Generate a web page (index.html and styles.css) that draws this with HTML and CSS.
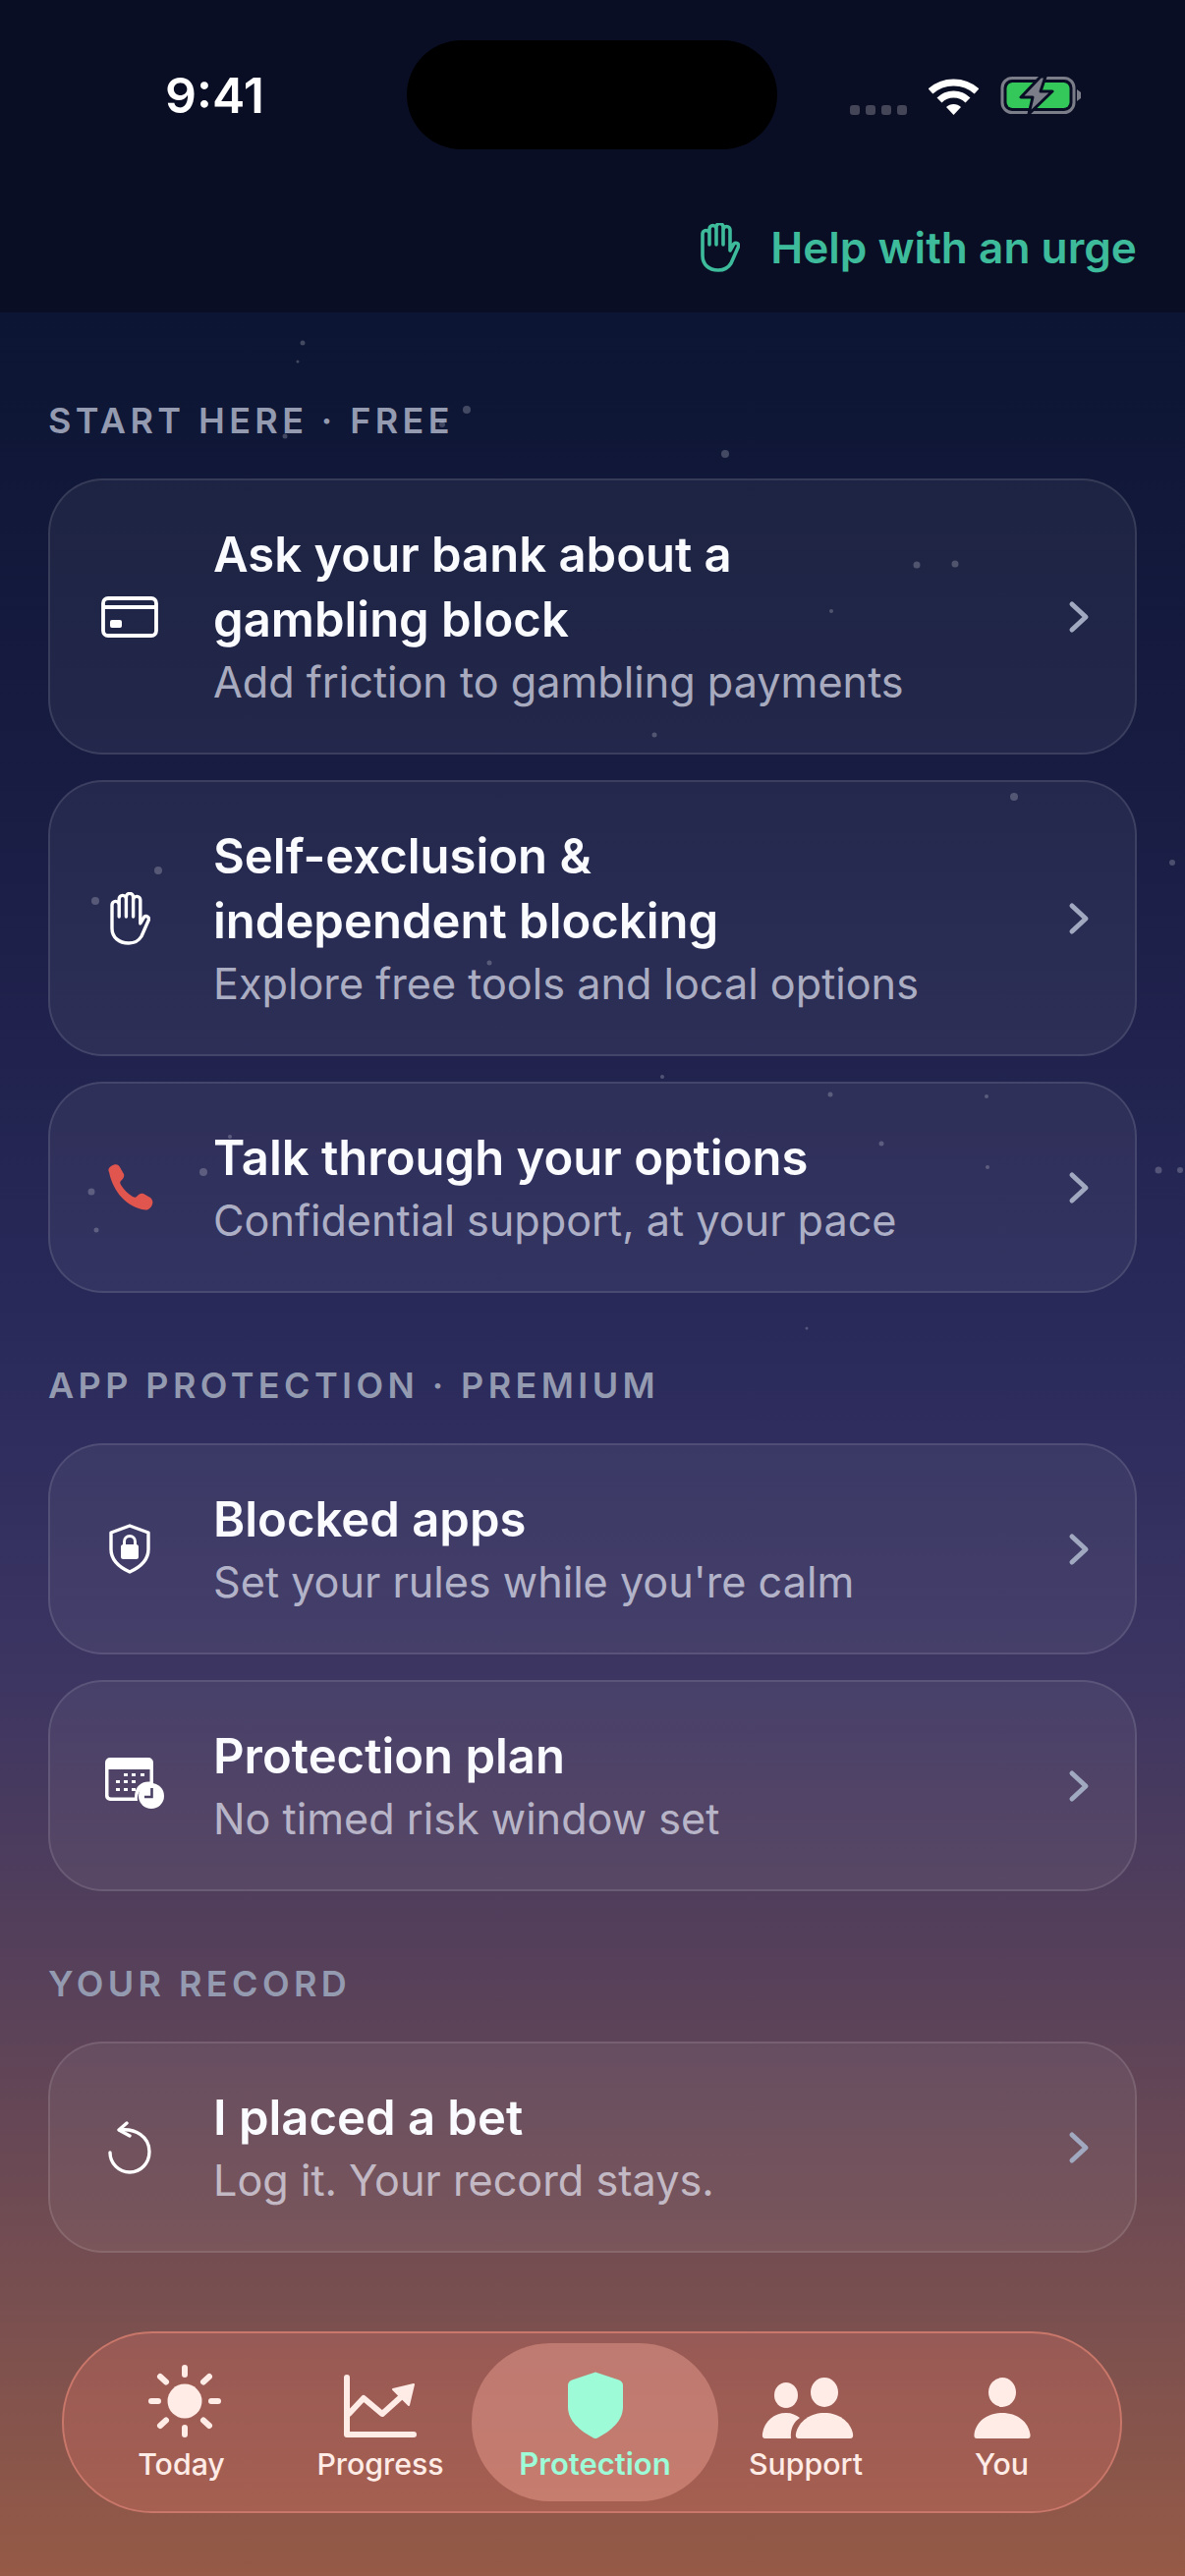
FILE: index.html
```html
<!DOCTYPE html>
<html lang="en">
<head>
    <meta charset="UTF-8">
    <meta name="viewport" content="width=device-width, initial-scale=1.0">
    <title>Protection</title>
    <link rel="stylesheet" href="styles.css">
</head>
<body>
    <div class="screen">
        <div class="topbar">
            <div class="statusbar">
                <div class="time">9:41</div>
                <div class="island"></div>
                <div class="status-icons">
                    <div class="signal"><span></span><span></span><span></span><span></span></div>
                    <svg class="wifi" width="51" height="37" viewBox="0 0 51 37">
                        <path d="M2 13 C15 1 36 1 49 13" fill="none" stroke="#fff" stroke-width="7"/>
                        <path d="M11 22 C19 14 32 14 40 22" fill="none" stroke="#fff" stroke-width="7"/>
                        <path d="M18 29 C22 25 29 25 33 29 L25.500 37 Z" fill="#fff"/>
                    </svg>
                    <svg class="battery" width="82" height="41" viewBox="0 0 82 41">
                        <rect x="2" y="3.500" width="73" height="35" rx="10" fill="none" stroke="#7b7d89" stroke-width="3"/>
                        <rect x="6.500" y="8" width="64" height="26" rx="6" fill="#34c759"/>
                        <path d="M78 15 L82 18 Q82.500 21 82 24 L78 27 Z" fill="#7b7d89"/>
                        <path d="M41 2 L21 23 L33 23 L29 40 L53 17 L41 17 L46 2 Z" fill="#7b7d89" stroke="#090e24" stroke-width="3" stroke-linejoin="round"/>
                    </svg>
                </div>
            </div>
            <a class="urge">
                <svg width="40" height="50" viewBox="0 0 40 50" fill="none" stroke="#3dbb9b" stroke-width="3.600" stroke-linecap="round" stroke-linejoin="round">
                    <path d="M2 30 V11 a3.500 3.500 0 0 1 7 0 M9 22 V6 a3.500 3.500 0 0 1 7 0 M16 22 V4 a3.500 3.500 0 0 1 7 0 V22 M23 7 a3.500 3.500 0 0 1 7 0 V28 L34 21 a2.800 2.800 0 0 1 4.500 3 L31 41 C28 46 24 48 18 48 C8 48 2 42 2 33 V30"/>
                </svg>
                <span>Help with an urge</span>
            </a>
        </div>

        <div class="content">
            <h2 class="section-label">START HERE · FREE</h2>
            <div class="card-list">
                <div class="card">
                    <div class="card-icon">
                        <svg width="58" height="42" viewBox="0 0 58 42" fill="none" stroke="#fff" stroke-width="3.800" stroke-linejoin="round">
                            <rect x="2" y="2" width="54" height="38" rx="5"/>
                            <path d="M2 11 H56"/>
                            <rect x="9" y="24" width="12" height="8" rx="2" fill="#fff" stroke="none"/>
                        </svg>
                    </div>
                    <div class="card-text">
                        <div class="card-title">Ask your bank about a<br>gambling block</div>
                        <div class="card-sub">Add friction to gambling payments</div>
                    </div>
                    <svg class="chevron" width="24" height="36" viewBox="0 0 24 36"><path d="M5 5 L19 18 L5 31"/></svg>
                </div>
                <div class="card">
                    <div class="card-icon">
                        <svg width="41" height="54" viewBox="0 0 41 54" fill="none" stroke="#fff" stroke-width="3.400" stroke-linecap="round" stroke-linejoin="round">
                            <path d="M2 34 V13 a3.600 3.600 0 0 1 7.200 0 M9.200 25 V7 a3.600 3.600 0 0 1 7.200 0 M16.400 25 V5 a3.600 3.600 0 0 1 7.200 0 V25 M23.600 8 a3.600 3.600 0 0 1 7.200 0 V32 L35 25 a3 3 0 0 1 4.500 3 L32 45 C29 50 25 52 19 52 C9 52 2 46 2 37 V34"/>
                        </svg>
                    </div>
                    <div class="card-text">
                        <div class="card-title">Self-exclusion &amp;<br>independent blocking</div>
                        <div class="card-sub">Explore free tools and local options</div>
                    </div>
                    <svg class="chevron" width="24" height="36" viewBox="0 0 24 36"><path d="M5 5 L19 18 L5 31"/></svg>
                </div>
                <div class="card">
                    <div class="card-icon">
                        <svg width="47" height="47" viewBox="0 0 47 47">
                            <path d="M2 8 C0 5 3 2 7 0.500 C10 -0.500 12 1 13 3 L17 10 C18 13 16 15 14 17 C13 18 13 19 14 21 C17 26 21 30 26 33 C28 34 29 34 30 33 C32 31 34 29 37 30 L44 34 C46 36 47 38 46 41 C45 44 42 47 39 46.500 C20 44 6 28 2 8 Z" fill="#e0554e"/>
                        </svg>
                    </div>
                    <div class="card-text">
                        <div class="card-title">Talk through your options</div>
                        <div class="card-sub">Confidential support, at your pace</div>
                    </div>
                    <svg class="chevron" width="24" height="36" viewBox="0 0 24 36"><path d="M5 5 L19 18 L5 31"/></svg>
                </div>
            </div>

            <h2 class="section-label">APP PROTECTION · PREMIUM</h2>
            <div class="card-list">
                <div class="card">
                    <div class="card-icon">
                        <svg width="42" height="51" viewBox="0 0 42 51" fill="none" stroke="#fff" stroke-width="3.400" stroke-linejoin="round">
                            <path d="M21 2 L40 9 V26 C40 37 32 44 21 49 C10 44 2 37 2 26 V9 Z"/>
                            <rect x="12" y="21" width="18" height="15" rx="2.500" fill="#fff" stroke="none"/>
                            <path d="M15.500 22 V18 a5.500 5.500 0 0 1 11 0 V22" stroke-width="3"/>
                        </svg>
                    </div>
                    <div class="card-text">
                        <div class="card-title">Blocked apps</div>
                        <div class="card-sub">Set your rules while you're calm</div>
                    </div>
                    <svg class="chevron" width="24" height="36" viewBox="0 0 24 36"><path d="M5 5 L19 18 L5 31"/></svg>
                </div>
                <div class="card">
                    <div class="card-icon">
                        <svg class="calendar" width="60" height="52" viewBox="0 0 60 52">
                            <path d="M5 0 H44 a5 5 0 0 1 5 5 V28 a14 14 0 0 0 -16 16 H5 a5 5 0 0 1 -5 -5 V5 a5 5 0 0 1 5 -5 Z M3.500 12 V38 a2.500 2.500 0 0 0 2.500 2.500 H30 C30 30 36 24 45.500 24.500 V12 Z" fill="#fff" fill-rule="evenodd"/>
                            <g fill="#fff">
                                <rect x="19" y="16" width="4" height="3"/><rect x="27" y="16" width="4" height="3"/><rect x="36" y="16" width="4" height="3"/>
                                <rect x="11" y="23" width="4" height="3"/><rect x="19" y="23" width="4" height="3"/><rect x="27" y="23" width="4" height="3"/>
                                <rect x="11" y="31" width="4" height="3"/><rect x="19" y="31" width="4" height="3"/><rect x="27" y="31" width="4" height="3"/>
                                <circle cx="47" cy="39" r="13"/>
                            </g>
                            <path d="M47.500 31 V40 H40" fill="none" stroke="#4a4165" stroke-width="2.600"/>
                        </svg>
                    </div>
                    <div class="card-text">
                        <div class="card-title">Protection plan</div>
                        <div class="card-sub">No timed risk window set</div>
                    </div>
                    <svg class="chevron" width="24" height="36" viewBox="0 0 24 36"><path d="M5 5 L19 18 L5 31"/></svg>
                </div>
            </div>

            <h2 class="section-label">YOUR RECORD</h2>
            <div class="card-list">
                <div class="card">
                    <div class="card-icon">
                        <svg width="44" height="54" viewBox="0 0 44 54" fill="none" stroke="#fff" stroke-width="3.400" stroke-linecap="round" stroke-linejoin="round">
                            <path d="M19 2 L11 9 L22 15"/>
                            <path d="M12 9 C28 7 42 16 42 31 C42 43 33 52 22 52 C11 52 2 43 2 32"/>
                        </svg>
                    </div>
                    <div class="card-text">
                        <div class="card-title">I placed a bet</div>
                        <div class="card-sub">Log it. Your record stays.</div>
                    </div>
                    <svg class="chevron" width="24" height="36" viewBox="0 0 24 36"><path d="M5 5 L19 18 L5 31"/></svg>
                </div>
            </div>
        </div>

        <div class="tabbar">
            <div class="tab">
                <svg class="sun" width="76" height="76" viewBox="0 0 76 76" fill="#ffece6">
                    <circle cx="38" cy="38" r="17.500"/>
                    <g stroke="#ffece6" stroke-width="6" stroke-linecap="round">
                        <path d="M38 4 V11 M38 65 V72 M4 38 H11 M65 38 H72 M13 13 L19 18.500 M63 13 L57 18.500 M13 63 L19 57.500 M63 63 L57 57.500"/>
                    </g>
                </svg>
                <span>Today</span>
            </div>
            <div class="tab">
                <svg width="76" height="66" viewBox="0 0 76 66" fill="none" stroke="#ffece6" stroke-width="6" stroke-linecap="round" stroke-linejoin="round">
                    <path d="M4 4 V62 H72"/>
                    <path d="M6 41 L21 25 L40 41 L60 23"/>
                    <path d="M51 16 L72 11 L67 32 Z" fill="#ffece6" stroke-width="2"/>
                </svg>
                <span>Progress</span>
            </div>
            <div class="tab active">
                <svg width="56" height="68" viewBox="0 0 56 68">
                    <path d="M28 0.500 L52 8.500 Q56 10 56 14 V36 C56 50 44 60 30 67.500 Q28 68.500 26 67.500 C12 60 0 50 0 36 V14 Q0 10 4 8.500 Z" fill="#9dfbd8"/>
                </svg>
                <span>Protection</span>
            </div>
            <div class="tab">
                <svg class="people" width="94" height="62" viewBox="0 0 94 62" fill="#ffece6">
                    <ellipse cx="25" cy="18" rx="12" ry="13"/>
                    <ellipse cx="64" cy="15" rx="14" ry="15"/>
                    <path d="M4 62 Q0 62 1 57 C3 44 13 36 25 36 C31 36 35 38 39 41 C33 45 29 52 30 62 Z"/>
                    <path d="M38 62 Q34 62 35 57 C38 44 50 36 64 36 C78 36 90 44 93 57 Q94 62 90 62 Z"/>
                </svg>
                <span>Support</span>
            </div>
            <div class="tab">
                <svg width="58" height="62" viewBox="0 0 58 62" fill="#ffece6">
                    <ellipse cx="29" cy="15" rx="14" ry="15"/>
                    <path d="M3 62 Q0 62 0.500 58 C2 45 14 36 29 36 C44 36 56 45 57.500 58 Q58 62 55 62 Z"/>
                </svg>
                <span>You</span>
            </div>
        </div>

        <svg class="stars" width="1206" height="1400" viewBox="0 0 1206 1400" fill="#fff" fill-opacity="0.22">
            <circle cx="308" cy="349" r="2.500"/><circle cx="303" cy="368" r="1.500"/><circle cx="475" cy="417" r="4"/>
            <circle cx="738" cy="462" r="4"/><circle cx="290" cy="444" r="2.500"/><circle cx="450" cy="432" r="3"/>
            <circle cx="933" cy="575" r="3.500"/><circle cx="972" cy="574" r="3.500"/><circle cx="846" cy="622" r="2"/>
            <circle cx="666" cy="748" r="2.500"/><circle cx="1032" cy="811" r="4"/><circle cx="1193" cy="878" r="3"/>
            <circle cx="161" cy="886" r="4"/><circle cx="97" cy="917" r="4"/><circle cx="498" cy="980" r="2.500"/>
            <circle cx="674" cy="1096" r="2"/><circle cx="845" cy="1114" r="2.500"/><circle cx="1004" cy="1116" r="2"/>
            <circle cx="897" cy="1164" r="2.500"/><circle cx="1005" cy="1188" r="2"/><circle cx="1179" cy="1191" r="3.500"/>
            <circle cx="1201" cy="1191" r="3"/><circle cx="207" cy="1193" r="4"/><circle cx="234" cy="1157" r="2"/>
            <circle cx="93" cy="1213" r="3.500"/><circle cx="98" cy="1252" r="2.500"/><circle cx="821" cy="1352" r="1.500"/>
        </svg>
    </div>
</body>
</html>
```

FILE: styles.css
```css
* {box-sizing: border-box;}
html, body {margin: 0; padding: 0;}
body {font-family: Inter, "Liberation Sans", sans-serif; color: #fff; background: #0c1533;}
.screen {position: relative; width: 1206px; height: 2622px; overflow: hidden; display: flex; flex-direction: column;
    background: linear-gradient(180deg, #0c1533 0, #0c1533 318px, #181c42 790px, #2b2b5c 1400px, #3c3562 1700px, #56405a 2000px, #784f50 2340px, #965a46 2622px);}

.topbar {height: 318px; background: #090e24; flex: none;}
.statusbar {display: grid; grid-template-columns: 414px 377px 1fr; padding-top: 41px;}
.time {font-size: 50px; font-weight: 600; line-height: 112px; padding-left: 168px;}
.island {height: 111px; background: #000; border-radius: 56px;}
.status-icons {display: flex; align-items: flex-end; padding: 37px 0 0 74px; height: 76px;}
.signal {display: flex; gap: 6px; margin-right: 22px;}
.signal span {width: 10px; height: 10px; border-radius: 3px; background: #444657;}
.wifi {margin-right: 22px;}
.urge {display: flex; justify-content: flex-end; align-items: center; gap: 31px; padding: 72px 49px 0 0; color: #3dbb9b; font-size: 44.2px; font-weight: 600;}

.content {flex: 1; padding: 0 49px;}
.section-label {margin: 0; font-size: 36px; font-weight: 600; letter-spacing: 0.122em; color: #949bb1; line-height: 44px;}
.content > .section-label:first-child {margin-top: 88px;}
.content > .card-list + .section-label {margin-top: 72px;}
.card-list {display: flex; flex-direction: column; gap: 26px; margin-top: 37px;}
.card {display: flex; align-items: center; border-radius: 56px; padding: 42.5px 45px 42.5px 45px;
    background: rgba(255,255,255,0.055); border: 2px solid rgba(255,255,255,0.11);}
.card-icon {width: 72px; margin-right: 49px; flex: none; display: flex; justify-content: center;}
.card-icon svg {display: block;}
.card-icon .calendar {margin: 0 0 6px 10px; flex: none;}
.card-text {flex: 1;}
.card-title {font-size: 49px; font-weight: 600; line-height: 66px; color: #fafbff;}
.card-sub {font-size: 43.2px; line-height: 60px; color: rgba(230,232,245,0.7);}
.chevron {flex: none; fill: none; stroke: #a1a9c1; stroke-width: 5; stroke-linecap: round; stroke-linejoin: round;}

.tabbar {position: absolute; left: 63px; top: 2373px; width: 1079px; height: 185px; padding: 10px; display: grid;
    grid-template-columns: 219px 186px 251px 178px 1fr; border-radius: 92px; border: 2px solid #c9776a;
    background: rgba(234,120,108,0.25);}
.tab {display: flex; flex-direction: column; align-items: center; justify-content: flex-end; padding-bottom: 18px; color: #ffece6; font-size: 30.3px; font-weight: 500; line-height: 40px; border-radius: 80px;}
.tab svg {margin-bottom: 6px;}
.tab .sun {margin-left: 6px;}
.tab .people {margin-left: 3px;}
.tab.active {background: rgba(247,170,155,0.4); color: #9dfbd8; font-size: 31px; font-weight: 600;}
.stars {position: absolute; left: 0; top: 0; pointer-events: none;}
```
